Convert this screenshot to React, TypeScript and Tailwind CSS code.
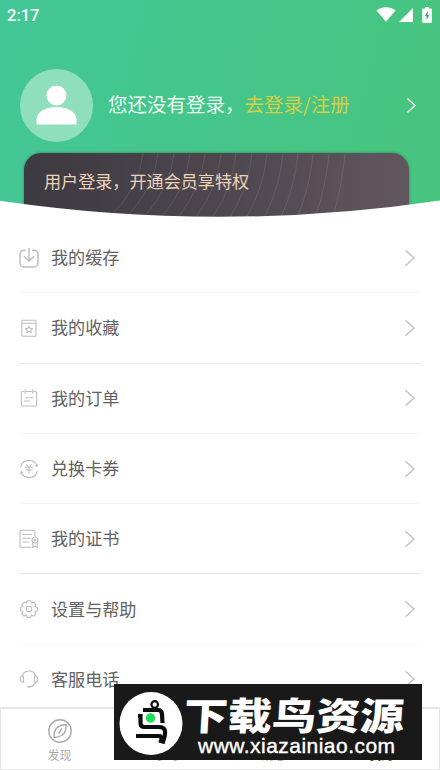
import type { ReactNode } from "react";

const icons: Record<string, ReactNode> = {
  cache: (
    <>
      <path d="M6.200 2.200H5A4 4 0 0 0 1 6.200V15a4 4 0 0 0 4 4h10a4 4 0 0 0 4-4V6.200a4 4 0 0 0-4-4h-1.200" strokeWidth="1.500" />
      <path d="M10 .2v12M5.300 8.500L10 13l4.700-4.500" strokeWidth="1.400" />
    </>
  ),
  favorite: (
    <>
      <path d="M17 5.300H4.200a1.500 1.500 0 0 1 0-3H17v15a1 1 0 0 1-1 1H4a1.200 1.200 0 0 1-1.200-1.200V4" />
      <path d="M10 8.100l1.100 2.200 2.400.3-1.700 1.700.4 2.400-2.200-1.100-2.200 1.100.4-2.400-1.700-1.700 2.400-.3z" />
    </>
  ),
  order: (
    <>
      <path d="M5 3.500H3.600a1.300 1.300 0 0 0-1.300 1.300v11.900A1.300 1.300 0 0 0 3.600 18h12.800a1.300 1.300 0 0 0 1.300-1.300V4.800a1.300 1.300 0 0 0-1.300-1.300H15M7.500 3.500h5M6.200 1.800v3.500M13.800 1.800v3.500" />
      <path d="M6.500 9.700h7.500M5.500 13h5" />
    </>
  ),
  exchange: (
    <>
      <path d="M1.800 7.500A8.500 8.500 0 0 1 18 7.200l-1.500-.5M18 7.200l.4-1.500M18.200 12.500A8.500 8.500 0 0 1 2 12.800l1.500.5M2 12.800l-.4 1.500" />
      <path d="M7.700 5.700L9 7.500M12.300 5.700L11 7.500M6.600 8.200h6.800M6.600 11h6.800M10 8v6.300" />
    </>
  ),
  certificate: (
    <>
      <path d="M12 18.200H3a2 2 0 0 1-2-2V3.300a2 2 0 0 1 2-2h11a2 2 0 0 1 2 2V6.500M4 5.500h9M4 9.300h7M4 13h6" />
      <circle cx="16" cy="11" r="3" />
      <circle cx="16" cy="11" r="1" />
      <path d="M13.800 13.500v5l2.200-1.500 2.200 1.500v-5" />
    </>
  ),
  settings: (
    <>
      <path d="M8.200 1.800h3.600l.7 2.300 2.300-1 2.200 2.500-1.200 2 2.600.9v3.200l-2.500.9 1.100 2.200-2.400 2.300-2.200-1-.8 2.300H8.200l-.7-2.300-2.300 1-2.400-2.300 1.100-2.200-2.300-.9V8.500l2.400-.9-1.200-2 2.400-2.500 2.200 1z" />
      <circle cx="10" cy="10" r="2.800" />
    </>
  ),
  service: (
    <>
      <path d="M3.300 7a7 7 0 0 1 13.400 0M16.600 13a6.500 6.500 0 0 1-5.800 4.700" />
      <path d="M4.500 6.800v6.500C2.300 13.300 1.200 12 1.200 10s1.100-3.200 3.300-3.200zM15.500 6.800v6.500c2.200 0 3.300-1.300 3.300-3.300s-1.100-3.200-3.300-3.200z" />
      <path d="M9.200 17.700h1.600" strokeWidth="1.800" />
    </>
  ),
};

const menu = [
  { icon: "cache", label: "我的缓存", line: "border-[#f5f5f5]" },
  { icon: "favorite", label: "我的收藏", line: "border-[#e8e8e8]" },
  { icon: "order", label: "我的订单", line: "border-[#f5f5f5]" },
  { icon: "exchange", label: "兑换卡券", line: "border-[#f2f2f2]" },
  { icon: "certificate", label: "我的证书", line: "border-[#e8e8e8]" },
  { icon: "settings", label: "设置与帮助", line: "border-[#f7f7f7]" },
  { icon: "service", label: "客服电话", line: "border-transparent" },
];

const tabs = ["发现", "学习", "消息", "我的"];

// x where each banner arc meets the top edge
const arcs = [119, 134, 150, 166, 181, 197, 212, 228, 243, 259, 274, 289, 305, 321];

function Chevron({ className }: { className: string }) {
  return (
    <svg viewBox="0 0 10 16" className={className} fill="none" stroke="currentColor" strokeWidth="1.500" strokeLinecap="round">
      <path d="M1 .8L9 8l-8 7.200" />
    </svg>
  );
}

function StatusBar() {
  return (
    <div className="flex h-[30px] items-center justify-between pl-[7px] pr-2 text-white">
      <span className="pt-[2px] font-[Roboto] text-[16.500px] font-medium leading-none">2:17</span>
      <div className="-mt-px flex items-center">
        <svg viewBox="0 0 20 15" className="h-[15px] w-5" fill="currentColor">
          <path d="M.5 3.600C6-.8 14-.8 19.500 3.600L10 14.800z" />
        </svg>
        <svg viewBox="0 0 14 14" className="ml-[3px] h-3.5 w-3.5" fill="currentColor">
          <path d="M14 0v14H0z" />
        </svg>
        <svg viewBox="0 0 10 16" className="ml-[9px] h-4 w-[10px]">
          <path d="M3 0h4v1.600h2a.8.8 0 0 1 .8.8V15a1 1 0 0 1-1 1H1.200a1 1 0 0 1-1-1V2.400a.8.800 0 0 1 .8-.8h2z" fill="white" />
          <path d="M5.800 4L2.800 9h1.800v4l3-5H5.800z" fill="#47a777" />
        </svg>
      </div>
    </div>
  );
}

function Header() {
  return (
    <header className="relative h-[217px] overflow-hidden bg-linear-[105deg,#43c797,#47c47d]">
      <StatusBar />
      <div className="mt-[38px] flex h-[74px] items-center pl-[19.500px] pr-6 text-[19.500px] text-[#e9faf1]">
        <div className="h-[73px] w-[73px] rounded-full bg-[#8fdfbd]">
          <svg viewBox="0 0 73 73" className="h-full w-full" fill="white">
            <circle cx="36.500" cy="26.500" r="10" />
            <path d="M16.500 55.500v-5c0-8 10-12.500 20-12.500s20 4.500 20 12.500v5z" />
          </svg>
        </div>
        <p className="-mt-[2px] ml-[15.500px] whitespace-nowrap leading-none">
          您还没有登录，<span className="text-[#d8ce47]">去登录/注册</span>
        </p>
        <Chevron className="ml-auto h-[15px] w-[9px] text-white" />
      </div>
      <div className="relative ml-6 mt-[10.500px] h-[68px] w-[385px] overflow-hidden rounded-t-[17px] bg-linear-to-r from-[#3d3941] via-[#4d464e] to-[#61575f] shadow-[0_0_3px_rgba(0,0,0,0.350)]">
        <svg viewBox="0 0 385 68" className="absolute inset-0 h-full w-full" fill="none" stroke="#b79f99" strokeOpacity=".2">
          {arcs.map((x, i) => (
            <path key={x} d={`M${x} 0Q${x - 3} 34 ${x - 33 + i * 1.6} 64`} />
          ))}
        </svg>
        <p className="relative pl-[20px] pt-[19px] text-[17.100px] leading-none text-[#ecd2b6]">用户登录，开通会员享特权</p>
      </div>
      <svg viewBox="0 0 440 18" preserveAspectRatio="none" className="absolute bottom-0 left-0 h-[18px] w-full" fill="white">
        <path d="M0 1.800Q220 34 440 1.500V18H0z" />
      </svg>
    </header>
  );
}

function Watermark() {
  return (
    <div className="absolute left-[114px] top-[684px] flex h-[76px] w-[308px] bg-[#191919] text-white">
      <svg viewBox="0 0 70 76" className="h-[76px] w-[70px] shrink-0" fill="none" stroke="#0c0c0c" strokeWidth="4.200">
        <circle cx="37" cy="39.500" r="31.500" fill="white" stroke="none" />
        <circle cx="40.700" cy="20.500" r="3.300" strokeWidth="2.200" />
        <path d="M29 26h15q3.500 0 4 4l.5 9" />
        <path d="M24 32h2.500v7q0 4 4 4h14q6 0 6.500 4t-2.500 12.500" />
        <path d="M22 52h23q2.500 0 2.500 3l-1 4" />
        <circle cx="36.500" cy="34" r="6" fill="white" stroke="none" />
        <circle cx="36.500" cy="34" r="4.700" fill="#1fdc59" stroke="none" />
      </svg>
      <div className="relative">
        <p className="absolute left-0 top-[10px] origin-left -skew-x-3 scale-x-[1.160] whitespace-nowrap text-[38px] font-black leading-[40px]">
          下载鸟资源
        </p>
        <p className="absolute left-[14px] top-[51px] whitespace-nowrap font-['Liberation_Sans'] text-[21px] leading-[22px] tracking-[0.470px] [-webkit-text-stroke:0.400px_white]">
          www.xiazainiao.com
        </p>
      </div>
    </div>
  );
}

export default function App() {
  return (
    <div className="relative flex h-[770px] w-[440px] flex-col overflow-hidden bg-white font-['Noto_Sans_CJK_SC',sans-serif]">
      <Header />
      <main className="h-[490px] shrink-0 overflow-hidden px-5 pt-[6px]">
        {menu.map((item) => (
          <div key={item.label} className={`flex h-[70.300px] items-center border-b-[1.500px] ${item.line}`}>
            <svg viewBox="0 0 20 20" className="-ml-px h-5 w-5" fill="none" stroke="#bdbdbd" strokeWidth="1.100" strokeLinecap="round" strokeLinejoin="round">
              {icons[item.icon]}
            </svg>
            <span className="-mt-[2px] ml-3 text-[17.100px] leading-none text-[#626262]">{item.label}</span>
            <Chevron className="ml-auto mr-[5px] h-4 w-[10px] text-[#c2c2c2]" />
          </div>
        ))}
      </main>
      <nav className="flex h-[63px] border-x border-b border-t-2 border-[#e6e6e6] bg-white pl-[5px] pr-1">
        {tabs.map((tab, i) => (
          <div key={tab} className={`flex flex-1 flex-col items-center pt-[10px] ${i === 3 ? "text-[#333]" : "text-[#a9a9a9]"}`}>
            <svg viewBox="0 0 24 24" className="h-6 w-6" fill="none" stroke="currentColor" strokeWidth="1.400" strokeLinejoin="round">
              <circle cx="12" cy="12" r="11.200" />
              <path d="M18 5.500c.5 5.500-1 9-4.500 11-2 1.200-4.500 1.700-7.500 2-.3-5 .8-8.500 4-10.700C12 6.400 15 5.700 18 5.500zM14 9.500l-3.500 5" />
            </svg>
            <span className="mt-[6px] text-[12px] leading-none">{tab}</span>
          </div>
        ))}
      </nav>
      <Watermark />
    </div>
  );
}
